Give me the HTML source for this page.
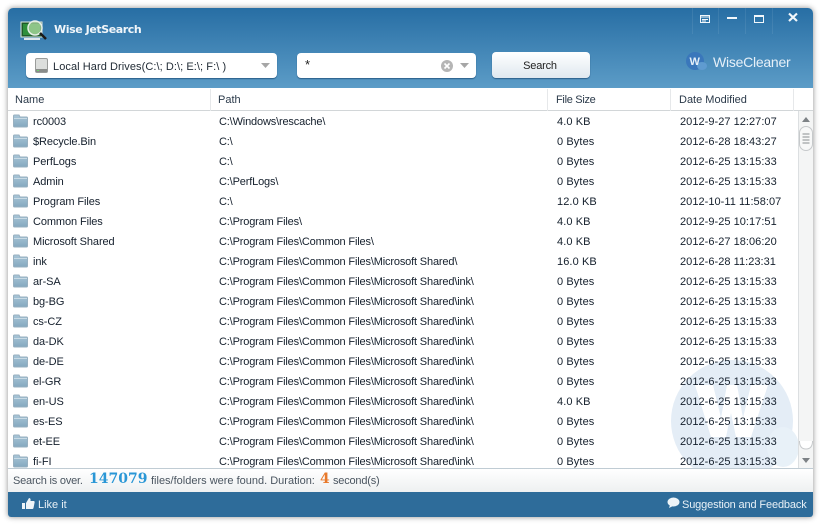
<!DOCTYPE html>
<html><head><meta charset="utf-8">
<style>
html,body{margin:0;padding:0;width:821px;height:526px;overflow:hidden;background:#fff;font-family:"Liberation Sans",sans-serif;font-size:11px;color:#141f2c}
div,span{position:absolute;white-space:nowrap}
#win{left:8px;top:8px;width:805px;height:509px;border-radius:5px 5px 3px 3px;box-shadow:0 0 6px rgba(0,0,0,.45);overflow:hidden;background:#fff}
#head{left:0;top:0;width:805px;height:80px;background:linear-gradient(#276ea4,#5c9cc7)}
.box{background:#fff;border-radius:4px;box-shadow:0 1px 1px rgba(0,40,80,.5)}
.hc{top:80px;height:23px;line-height:25px;color:#2b3a4a}
.r{height:20px;line-height:22px}
.c1{left:25px;letter-spacing:-.1px}.c2{left:211px;letter-spacing:-.16px}.c3{left:549px;letter-spacing:.1px}.c4{left:672px;letter-spacing:.04px}
.st{top:466px;line-height:14px;color:#4a5560}
.sn{top:462px;line-height:18px;font-weight:bold;font-family:'DejaVu Serif',serif;font-size:14px}
</style></head><body>
<div id="win">
<div id="head"></div>
<svg style="position:absolute;left:11px;top:9px" width="38" height="28" viewBox="0 0 38 28">
<rect x="2" y="5" width="21" height="15" fill="#1d5a2a" stroke="#dfe8e0"/><rect x="4" y="7" width="17" height="11" fill="#2f8f3c"/>
<rect x="5" y="21" width="16" height="2" fill="#dfe6ec"/>
<circle cx="16" cy="11" r="7" fill="#b7dca8" fill-opacity=".7" stroke="#e8efe8" stroke-width="1.5"/>
<path d="M21 16l6 6" stroke="#1a1a1a" stroke-width="2.500"/>
</svg>
<span style="left:46px;top:15px;font-weight:bold;color:#f1f6fa;line-height:14px;font-family:'DejaVu Sans',sans-serif;font-size:11px;letter-spacing:-.42px">Wise JetSearch</span>

<div style="left:684px;top:0;width:1px;height:26px;background:rgba(255,255,255,.08)"></div>
<div style="left:710px;top:0;width:1px;height:26px;background:rgba(255,255,255,.08)"></div>
<div style="left:737px;top:0;width:1px;height:26px;background:rgba(255,255,255,.08)"></div>
<div style="left:764px;top:0;width:1px;height:26px;background:rgba(255,255,255,.08)"></div>
<svg style="position:absolute;left:690px;top:0" width="115" height="26" viewBox="0 0 115 26" fill="none" stroke="#f2f7fb">
<path d="M2.500 7.500h9v7h-9zM2.500 9h9M4 11.500h6M4 13h4" stroke-width="1"/>
<rect x="29" y="9" width="10" height="2" fill="#f2f7fb" stroke="none"/>
<rect x="56.500" y="7.500" width="9" height="7" stroke-width="1"/><path d="M56 8h10" stroke-width="2"/>
<path d="M91 5.500l8 7.500M99 5.500l-8 7.500" stroke-width="2.200"/>
</svg>

<svg style="position:absolute;left:677px;top:43px" width="24" height="22" viewBox="0 0 24 22"><circle cx="10" cy="10" r="9" fill="#3a77bb"/><ellipse cx="17" cy="15" rx="5" ry="4" fill="#5f9bd0"/><text x="4.500" y="14" font-family="Liberation Sans" font-size="11" font-weight="bold" fill="#e5eff8">W</text></svg>
<span style="left:705px;top:46px;font-size:14px;line-height:16px;color:#e6f0f8;letter-spacing:-.25px">WiseCleaner</span>

<div class="box" style="left:18px;top:45px;width:251px;height:25px"></div>
<svg style="position:absolute;left:27px;top:50px" width="14" height="16" viewBox="0 0 14 16"><rect x=".5" y=".5" width="12" height="14" rx="1.500" fill="#dcdedc" stroke="#9a9c9a"/><rect x="1" y="11" width="11" height="3" fill="#8a8c8a"/><rect x="2" y="12" width="2" height="1" fill="#6fd06f"/></svg>
<span style="left:45px;top:52px;line-height:14px;color:#222c36;letter-spacing:.07px">Local Hard Drives(C:\; D:\; E:\; F:\ )</span>
<svg style="position:absolute;left:253px;top:55px" width="10" height="6"><path d="M0 0h9l-4.500 5z" fill="#a6a6a6"/></svg>

<div class="box" style="left:289px;top:45px;width:179px;height:25px"></div>
<span style="left:297px;top:50px;line-height:14px;color:#222;font-size:13px">*</span>
<svg style="position:absolute;left:433px;top:52px" width="12" height="12" viewBox="0 0 12 12"><circle cx="6" cy="6" r="6" fill="#b5b5b5"/><path d="M3.500 3.500l5 5M8.500 3.500l-5 5" stroke="#fff" stroke-width="1.600"/></svg>
<svg style="position:absolute;left:452px;top:55px" width="10" height="6"><path d="M0 0h9l-4.500 5z" fill="#a6a6a6"/></svg>

<div style="left:484px;top:44px;width:96px;height:26px;padding-right:2px;border-radius:4px;background:linear-gradient(#fff,#dfe8ef);box-shadow:0 1px 1px rgba(0,40,80,.5);text-align:center;line-height:29px;color:#222;letter-spacing:-.2px">Search</div>

<div style="left:0;top:80px;width:805px;height:22px;background:#fff;border-bottom:1px solid #d2d6d8"></div>
<div style="left:202px;top:81px;width:1px;height:22px;background:#e6e8ea"></div>
<div style="left:539px;top:81px;width:1px;height:22px;background:#e6e8ea"></div>
<div style="left:662px;top:81px;width:1px;height:22px;background:#e6e8ea"></div>
<div style="left:785px;top:81px;width:1px;height:22px;background:#e6e8ea"></div>
<span class="hc" style="left:7px">Name</span><span class="hc" style="left:210px">Path</span><span class="hc" style="left:548px;letter-spacing:-.3px">File Size</span><span class="hc" style="left:671px">Date Modified</span>

<svg style="position:absolute;left:663px;top:351px" width="137" height="109" viewBox="0 0 137 109"><circle cx="61" cy="62" r="61" fill="#e4edf6"/><ellipse cx="112" cy="88" rx="16" ry="20" fill="#e8f1f8"/><path d="M24 26h18l8 33 6-33h10l6 33 8-33h17l-17 52h-15l-5-24-5 24h-15z" fill="#fff"/></svg>

<div id="rows" style="left:0;top:103px;width:790px;height:357px;overflow:hidden"></div>
<script>
var d=[["rc0003","C:\\Windows\\rescache\\","4.0 KB","2012-9-27 12:27:07"],["$Recycle.Bin","C:\\","0 Bytes","2012-6-28 18:43:27"],["PerfLogs","C:\\","0 Bytes","2012-6-25 13:15:33"],["Admin","C:\\PerfLogs\\","0 Bytes","2012-6-25 13:15:33"],["Program Files","C:\\","12.0 KB","2012-10-11 11:58:07"],["Common Files","C:\\Program Files\\","4.0 KB","2012-9-25 10:17:51"],["Microsoft Shared","C:\\Program Files\\Common Files\\","4.0 KB","2012-6-27 18:06:20"],["ink","C:\\Program Files\\Common Files\\Microsoft Shared\\","16.0 KB","2012-6-28 11:23:31"]];
var P="C:\\Program Files\\Common Files\\Microsoft Shared\\ink\\",T="2012-6-25 13:15:33";
[["ar-SA","0 Bytes"],["bg-BG","0 Bytes"],["cs-CZ","0 Bytes"],["da-DK","0 Bytes"],["de-DE","0 Bytes"],["el-GR","0 Bytes"],["en-US","4.0 KB"],["es-ES","0 Bytes"],["et-EE","0 Bytes"],["fi-FI","0 Bytes"]].forEach(function(x){d.push([x[0],P,x[1],T])});
var h='<svg width="0" height="0" style="position:absolute"><defs><linearGradient id="g" x1="0" y1="0" x2="0" y2="1"><stop offset="0" stop-color="#a9c6d8"/><stop offset="1" stop-color="#84a8bf"/></linearGradient></defs></svg>';
d.forEach(function(x,i){var t=i*20;
h+='<svg style="position:absolute;left:5px;top:'+(t+3)+'px" width="15" height="14"><path d="M.5 3V2q0-1 1-1h4.500l1 2h6.500q1 0 1 1v8q0 1-1 1h-12q-1 0-1-1z" fill="url(#g)" stroke="#98b0c0"/><path d="M1 4.500h13" stroke="#c8dae5"/></svg>';
h+='<span class="r c1" style="top:'+t+'px">'+x[0]+'</span><span class="r c2" style="top:'+t+'px">'+x[1]+'</span><span class="r c3" style="top:'+t+'px">'+x[2]+'</span><span class="r c4" style="top:'+t+'px">'+x[3]+'</span>';});
document.getElementById("rows").innerHTML=h;
</script>

<div style="left:790px;top:103px;width:15px;height:357px;background:#f4f5f5;border-left:1px solid #dcdfe1"></div>
<svg style="position:absolute;left:790px;top:103px" width="15" height="357" viewBox="0 0 15 357">
<path d="M8 6l4 5h-8z" fill="#7d8286"/>
<rect x="1.500" y="15.500" width="13" height="24" rx="6.500" fill="#f7f8f8" stroke="#c6c9cb"/>
<path d="M4.500 23h7M4.500 26h7M4.500 29h7M4.500 32h7" stroke="#8a8e91"/>
<path d="M1.500 330q0 8 6.500 8t6.500-8" fill="#fff" stroke="#c6c9cb"/>
<path d="M8 352l-4-5h8z" fill="#7d8286"/>
</svg>

<div style="left:0;top:460px;width:805px;height:24px;border-top:1px solid #c0ccd4;box-sizing:border-box;background:linear-gradient(#fff,#eef0f1)"></div>
<span class="st" style="left:5px;letter-spacing:-.2px">Search is over.</span>
<span class="sn" style="left:81px;color:#2a97d6">147079</span>
<span class="st" style="left:143px">files/folders were found. Duration:</span>
<span class="sn" style="left:312px;color:#e8792b">4</span>
<span class="st" style="left:325px;letter-spacing:-.2px">second(s)</span>

<div style="left:0;top:484px;width:805px;height:25px;background:#2e6c9a"></div>
<svg style="position:absolute;left:14px;top:489px" width="13" height="13" viewBox="0 0 13 13"><path d="M0 6h3v6H0zM4 6l3-5q2 0 1.500 3H12q1 .5.500 2l-1 5q-.3 1-1 1H4z" fill="#eef4f8"/></svg>
<span style="left:30px;top:490px;line-height:14px;color:#e8f1f7">Like it</span>
<svg style="position:absolute;left:659px;top:489px" width="13" height="12" viewBox="0 0 13 12"><ellipse cx="6.500" cy="5" rx="6" ry="4.500" fill="#eef4f8"/><path d="M3 8l-1 3 4-2z" fill="#eef4f8"/></svg>
<span style="left:674px;top:490px;line-height:14px;color:#e8f1f7;letter-spacing:-.14px">Suggestion and Feedback</span>
</div>
</body></html>
